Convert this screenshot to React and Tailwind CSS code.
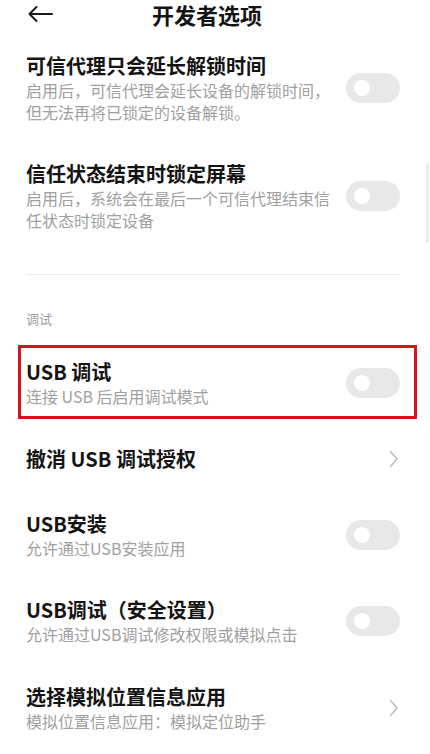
import React from 'react';

const font = { fontFamily: '"Noto Sans CJK SC", "Noto Sans", sans-serif' };

const Toggle = () => (
  <div className="w-[54px] h-[30px] rounded-full bg-[#e8e8e8] flex items-center pl-[8px] shrink-0">
    <div className="w-[16px] h-[16px] rounded-full bg-white"></div>
  </div>
);

const Chevron = () => (
  <svg width="10" height="18" viewBox="0 0 10 18" className="shrink-0 mr-[1px]">
    <path d="M1.5 1.5 L8 9 L1.5 16.5" fill="none" stroke="#b8b8b8" strokeWidth="1.4" strokeLinecap="round" strokeLinejoin="round" />
  </svg>
);

const Row = ({ title, sub, right, className = '' }) => (
  <div className={`flex items-center justify-between ${className}`}>
    <div className="w-[310px]">
      <div className="text-[20px] leading-[26px] font-semibold text-[#141414]">{title}</div>
      {sub && <div className="text-[16px] leading-[22px] text-[#a0a0a0]">{sub}</div>}
    </div>
    {right}
  </div>
);

export default function App() {
  return (
    <div className="relative w-[430px] h-[754px] bg-white overflow-hidden" style={font}>
      {/* Header */}
      <div className="h-[34px] flex items-start px-[28px]">
        <svg width="25" height="16" viewBox="0 0 25 16" className="mt-[6px]">
          <path d="M1.5 8 H24 M8.5 1 L1.5 8 L8.5 15" fill="none" stroke="#1a1a1a" strokeWidth="2" strokeLinecap="round" strokeLinejoin="round" />
        </svg>
        <div className="ml-[99px] mt-px text-[22px] leading-[26px] font-semibold text-[#141414]">开发者选项</div>
      </div>

      <div className="px-[26px]">
        <Row
          className="py-[19px] pr-[4px]"
          title="可信代理只会延长解锁时间"
          sub="启用后，可信代理会延长设备的解锁时间，但无法再将已锁定的设备解锁。"
          right={<Toggle />}
        />
        <Row
          className="py-[19px] pr-[4px]"
          title="信任状态结束时锁定屏幕"
          sub="启用后，系统会在最后一个可信代理结束信任状态时锁定设备"
          right={<Toggle />}
        />
        <div className="mt-[24px] h-px bg-[#ececec] mr-[4px]"></div>
        <div className="mt-[35px] text-[13px] leading-[18px] text-[#a0a0a0]">调试</div>
      </div>

      {/* Highlighted row */}
      <div className="mt-[17px] ml-[18px] w-[399px] border-[3px] border-[#d3141c] pt-[11px] pb-[9px] pl-[5px] pr-[14px]">
        <Row title="USB 调试" sub="连接 USB 后启用调试模式" right={<Toggle />} />
      </div>

      <div className="px-[26px]">
        <Row className="mt-[8px] py-[19px] pr-[4px]" title="撤消 USB 调试授权" right={<Chevron />} />
        <Row
          className="mt-px py-[19px] pr-[4px]"
          title="USB安装"
          sub="允许通过USB安装应用"
          right={<Toggle />}
        />
        <Row
          className="py-[19px] pr-[4px]"
          title="USB调试（安全设置）"
          sub="允许通过USB调试修改权限或模拟点击"
          right={<Toggle />}
        />
        <Row
          className="mt-px py-[19px] pr-[4px]"
          title="选择模拟位置信息应用"
          sub="模拟位置信息应用：模拟定位助手"
          right={<Chevron />}
        />
      </div>

      {/* Scrollbar */}
      <div className="absolute right-[1px] top-[163px] w-[3px] h-[80px] rounded-full bg-[#ececec]"></div>
    </div>
  );
}
